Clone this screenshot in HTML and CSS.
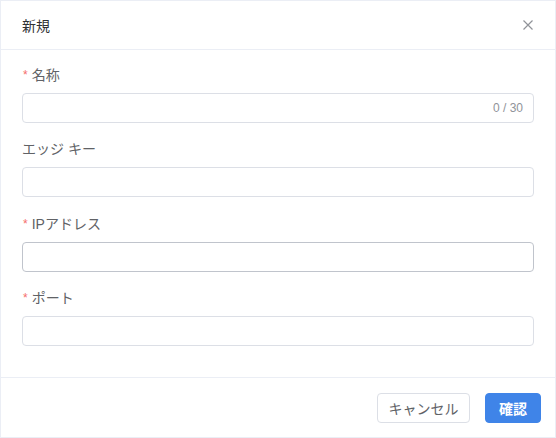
FILE: index.html
```html
<!DOCTYPE html>
<html lang="ja">
<head>
<meta charset="utf-8">
<link rel="stylesheet" href="styles.css">
</head>
<body>
<div class="dialog">
  <div class="header">
    <span class="title">新規</span>
    <button class="close" aria-label="close">
      <svg width="10" height="10" viewBox="0 0 10 10"><path d="M0.5 0.5L9.5 9.5M9.5 0.5L0.5 9.5" stroke="#909399" stroke-width="1.2" fill="none"/></svg>
    </button>
  </div>
  <div class="body">
    <div class="item">
      <div class="label"><span class="req">*</span>名称</div>
      <div class="input"><span class="count">0 / 30</span></div>
    </div>
    <div class="item">
      <div class="label">エッジ キー</div>
      <div class="input"></div>
    </div>
    <div class="item">
      <div class="label"><span class="req">*</span>IPアドレス</div>
      <div class="input hover"></div>
    </div>
    <div class="item">
      <div class="label"><span class="req">*</span>ポート</div>
      <div class="input"></div>
    </div>
  </div>
  <div class="footer">
    <button class="btn">キャンセル</button>
    <button class="btn primary">確認</button>
  </div>
</div>
</body>
</html>
```
FILE: styles.css
```css
* { box-sizing: border-box; }
html, body { margin: 0; padding: 0; background: #fff; }
body { font-family: "Liberation Sans", "Noto Sans CJK JP", sans-serif; }
.dialog {
  width: 556px;
  height: 438px;
  border: 1px solid #ebeef5;
  display: flex;
  flex-direction: column;
  background: #fff;
}
.header {
  height: 49px;
  border-bottom: 1px solid #ebeef5;
  display: flex;
  align-items: center;
  justify-content: space-between;
  padding: 0 21px 0 21px;
}
.title { font-size: 14px; color: #303133; line-height: 20px; padding-top: 1px; }
.close {
  border: 0; background: none; padding: 0; margin: 0;
  width: 10px; height: 10px; display: flex;
  margin-right: 1px;
}
.body {
  flex: 1;
  padding: 15px 21px 0 21px;
  border-bottom: 1px solid #ebeef5;
}
.item { margin-bottom: 16.3px; }
.label {
  font-size: 14px;
  line-height: 20px;
  color: #606266;
  margin-bottom: 8px;
  display: flex;
  align-items: center;
}
.req { color: #f56c6c; font-size: 12px; margin-right: 4px; padding-left: 1px; }
.input {
  height: 30px;
  border: 1px solid #dcdfe6;
  border-radius: 4px;
  display: flex;
  align-items: center;
  justify-content: flex-end;
  padding-right: 10px;
}
.input.hover { border-color: #c0c4cc; }
.count { font-size: 12px; color: #909399; }
.footer {
  height: 59px;
  display: flex;
  justify-content: flex-end;
  align-items: center;
  gap: 15px;
  padding: 0 14px 0 0;
}
.btn {
  height: 30px;
  border: 1px solid #dcdfe6;
  border-radius: 4px;
  background: #fff;
  color: #606266;
  font-family: inherit;
  font-size: 14px;
  padding: 0;
  width: 93px;
}
.btn.primary {
  width: 56px;
  background: #3f84e8;
  border-color: #3f84e8;
  color: #fff;
  font-weight: bold;
}
```
